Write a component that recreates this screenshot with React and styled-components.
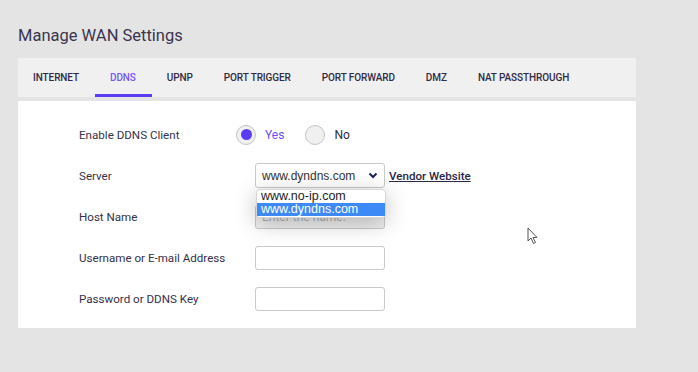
import React from 'react';
import styled, {createGlobalStyle} from 'styled-components';

const GlobalStyle = createGlobalStyle`
  html, body {
    margin: 0;
    padding: 0;
    background: #e4e4e4;
  }
  body {
    font-family: Roboto, "Liberation Sans", sans-serif;
    color: #35304b;
  }
`;

const tabs = ['INTERNET', 'DDNS', 'UPNP', 'PORT TRIGGER', 'PORT FORWARD', 'DMZ', 'NAT PASSTHROUGH'];

export default function App() {
  return (
    <Page>
      <GlobalStyle />
      <Title>Manage WAN Settings</Title>
      <TabBar>
        {tabs.map(t => (
          <Tab key={t} active={t === 'DDNS'}>
            {t}
          </Tab>
        ))}
      </TabBar>
      <Panel>
        <Row>
          <Label>Enable DDNS Client</Label>
          <RadioGroup>
            <RadioOption checked>
              <RadioCircle checked />
              Yes
            </RadioOption>
            <RadioOption>
              <RadioCircle />
              No
            </RadioOption>
          </RadioGroup>
        </Row>
        <Row>
          <Label>Server</Label>
          <SelectWrap>
            <SelectBox>
              <span>www.dyndns.com</span>
              <svg width="10" height="7" viewBox="0 0 10 7">
                <polyline points="1.5,1.5 5,5 8.5,1.5" fill="none" stroke="#1c2458" strokeWidth="2" />
              </svg>
            </SelectBox>
            <DropList>
              <DropItem>www.no-ip.com</DropItem>
              <DropItem selected>www.dyndns.com</DropItem>
            </DropList>
          </SelectWrap>
          <VendorLink href="#">Vendor Website</VendorLink>
        </Row>
        <Row>
          <Label>Host Name</Label>
          <Input placeholder="Enter the name." shaded />
        </Row>
        <Row>
          <Label>Username or E-mail Address</Label>
          <Input />
        </Row>
        <Row>
          <Label>Password or DDNS Key</Label>
          <Input type="password" />
        </Row>
        <Cursor width="12" height="18" viewBox="0 0 12 18">
          <path d="M1 1 L1 14 L4 11 L6.5 16.5 L8.5 15.5 L6 10.5 L10 10.5 Z" fill="#fff" stroke="#555" strokeWidth="1" strokeLinejoin="round" />
        </Cursor>
      </Panel>
    </Page>
  );
}

const Page = styled.div`
  width: 698px;
  height: 372px;
  padding: 25px 62px 0 18px;
  box-sizing: border-box;
`;

const Title = styled.h1`
  margin: 0;
  font-size: 16.5px;
  font-weight: 400;
  line-height: 22px;
  color: #3a354f;
  height: 33px;
`;

const TabBar = styled.div`
  display: flex;
  height: 39px;
  background: #f0f0f0;
  margin-bottom: 4px;
`;

const Tab = styled.div`
  display: flex;
  align-items: center;
  padding: 3px 16px 0 15px;
  font-size: 10px;
  font-weight: 500;
  letter-spacing: -0.1px;
  color: ${p => (p.active ? '#7457f6' : '#2f2b45')};
  border-bottom: 3px solid ${p => (p.active ? '#5a3cf2' : 'transparent')};
  box-sizing: border-box;
`;

const Panel = styled.div`
  position: relative;
  background: #fff;
  padding: 13px 0 9px 61px;
  display: flex;
  flex-direction: column;
`;

const Row = styled.div`
  display: flex;
  align-items: center;
  height: 41px;
`;

const Label = styled.div`
  width: 176px;
  font-size: 11.6px;
  color: #35304b;
`;

const RadioGroup = styled.div`
  display: flex;
  align-items: center;
  gap: 21px;
  margin-left: -19px;
`;

const RadioOption = styled.label`
  display: flex;
  align-items: center;
  gap: 9px;
  font-size: 12px;
  color: ${p => (p.checked ? '#6c4ff5' : '#2f2b45')};
`;

const RadioCircle = styled.span`
  width: 18px;
  height: 18px;
  border-radius: 50%;
  border: 1px solid #c4c4c4;
  background: #f0f0f0;
  display: flex;
  align-items: center;
  justify-content: center;
  &::after {
    content: '';
    display: ${p => (p.checked ? 'block' : 'none')};
    width: 11px;
    height: 11px;
    border-radius: 50%;
    background: #5b3cf4;
  }
`;

const SelectWrap = styled.div`
  position: relative;
`;

const SelectBox = styled.div`
  width: 130px;
  height: 25px;
  box-sizing: border-box;
  border: 1px solid #c9c9c9;
  border-radius: 3px;
  display: flex;
  align-items: center;
  justify-content: space-between;
  padding: 0 6px 0 6px;
  font-family: "Liberation Sans", Arial, sans-serif;
  font-size: 12px;
  color: #333;
`;

const DropList = styled.div`
  position: absolute;
  top: 26px;
  left: 1px;
  width: 128px;
  padding: 0 0 1px;
  background: #fff;
  border-radius: 4px;
  border: 1px solid #d6d6d6;
  box-shadow: 0 5px 22px rgba(0, 0, 0, 0.26);
  z-index: 2;
`;

const DropItem = styled.div`
  height: 13px;
  line-height: 13px;
  padding: 0 4px;
  font-family: "Liberation Sans", Arial, sans-serif;
  font-size: 12.5px;
  color: ${p => (p.selected ? '#fff' : '#222')};
  background: ${p => (p.selected ? '#3d8af7' : 'transparent')};
`;

const VendorLink = styled.a`
  margin-left: 4px;
  font-size: 11.6px;
  font-weight: 500;
  color: #2a2848;
  text-decoration: underline;
`;

const Input = styled.input`
  width: 130px;
  height: 24px;
  box-sizing: border-box;
  border: 1px solid #c9c9c9;
  border-radius: 3px;
  padding: 0 6px;
  font-size: 12px;
  font-family: Roboto, sans-serif;
  outline: none;
  background: ${p => (p.shaded ? '#efefef' : '#fff')};
  &::placeholder {
    color: #b0b0b0;
  }
`;

const Cursor = styled.svg`
  position: absolute;
  left: 509px;
  top: 126px;
`;
